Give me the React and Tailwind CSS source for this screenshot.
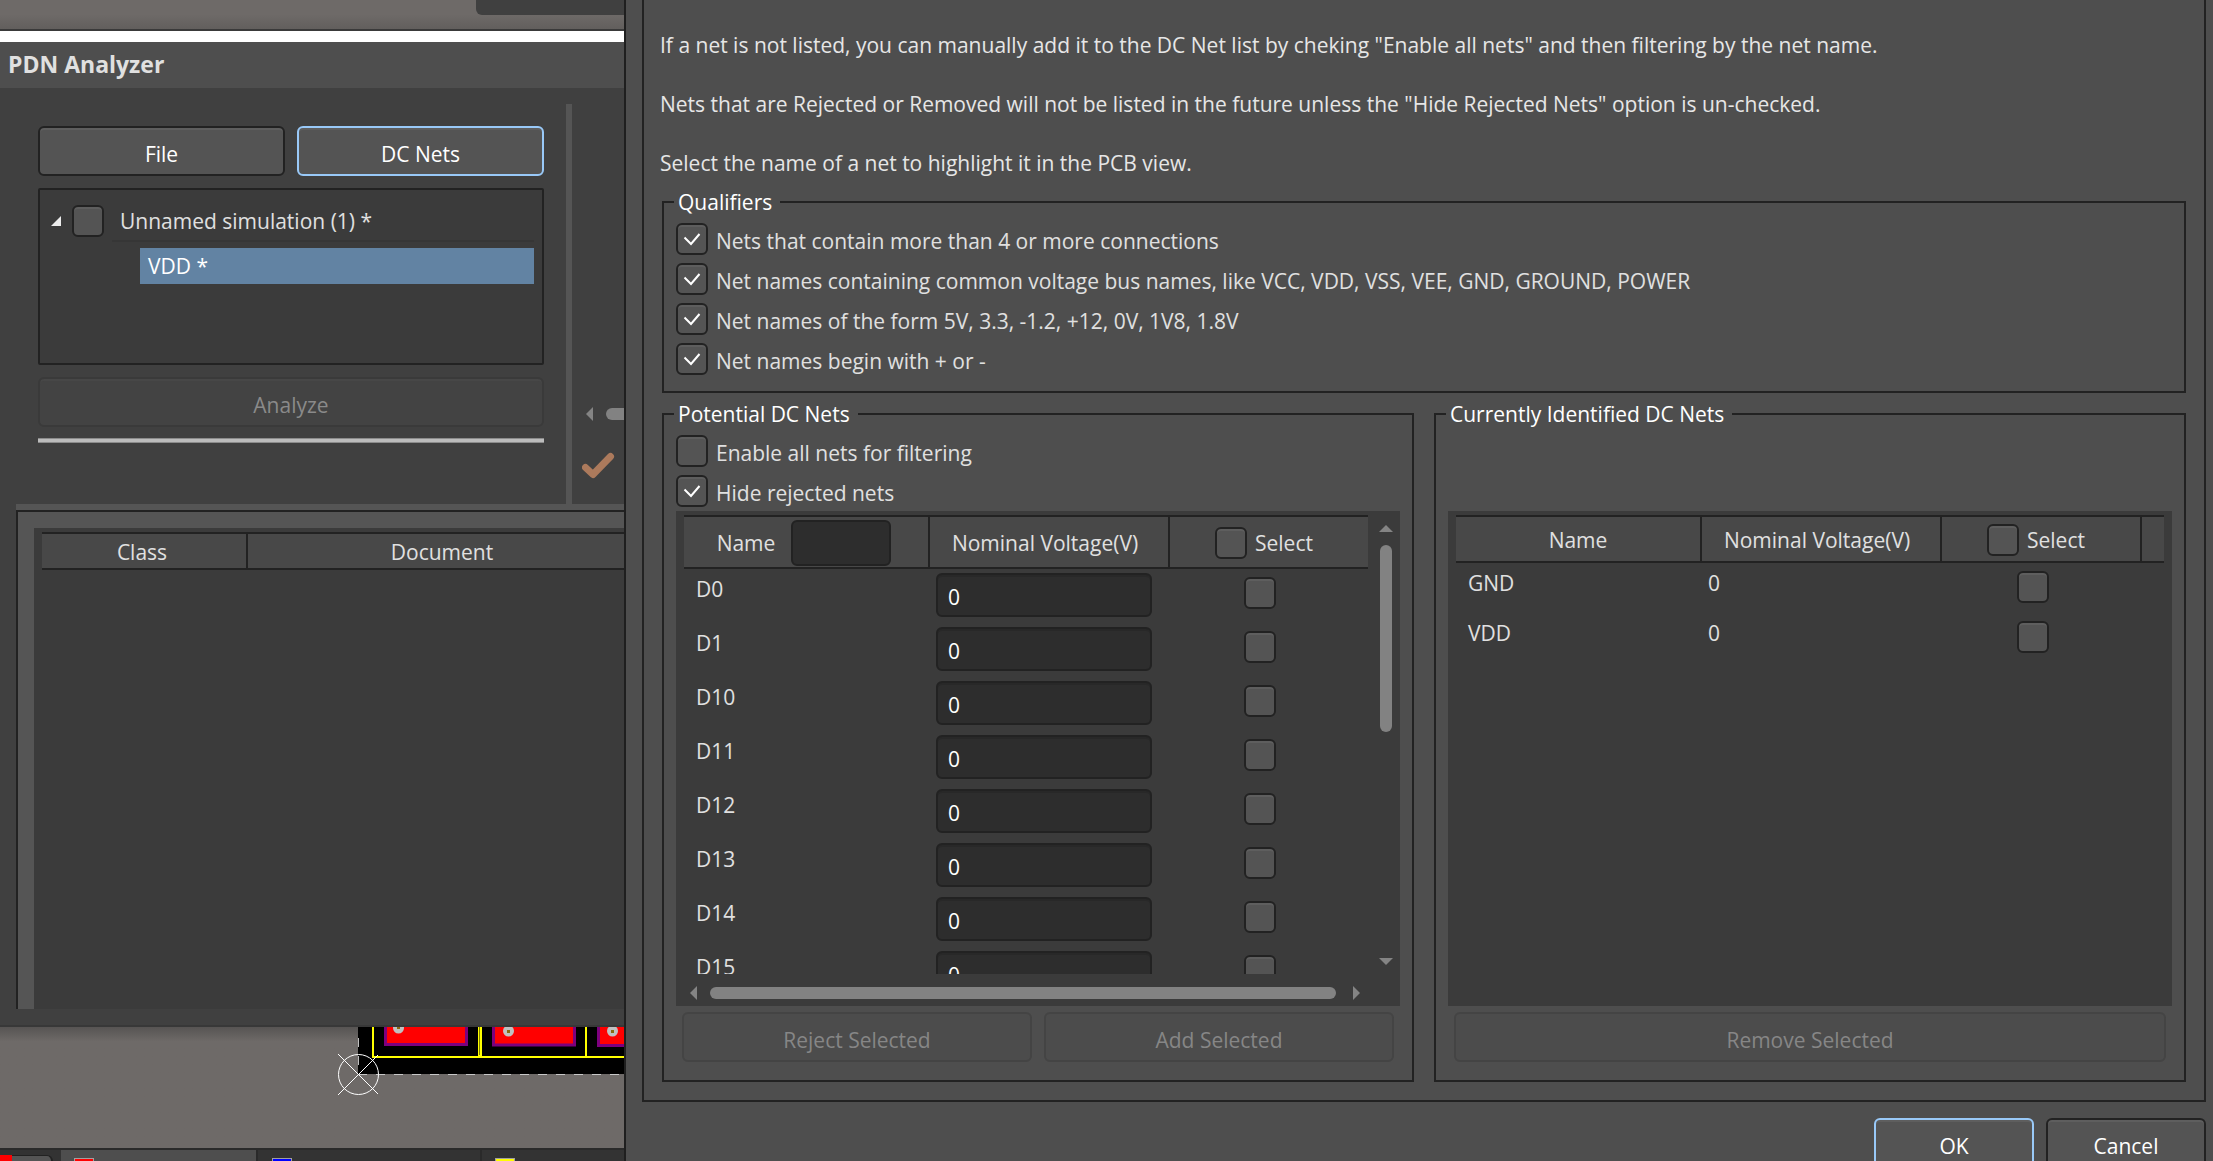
import React from "react";

const QUALIFIERS = [
  "Nets that contain more than 4 or more connections",
  "Net names containing common voltage bus names, like VCC, VDD, VSS, VEE, GND, GROUND, POWER",
  "Net names of the form 5V, 3.3, -1.2, +12, 0V, 1V8, 1.8V",
  "Net names begin with + or -",
];

const POTENTIAL = ["D0", "D1", "D10", "D11", "D12", "D13", "D14", "D15"];

const IDENTIFIED = [
  { name: "GND", voltage: "0" },
  { name: "VDD", voltage: "0" },
];

function CheckBox({ id, checked = false, label }) {
  return (
    <span className="relative block h-8 w-8 shrink-0">
      <input
        id={id}
        type="checkbox"
        defaultChecked={checked}
        aria-label={label}
        className="peer block h-8 w-8 appearance-none rounded-md border-2 border-[#222222] bg-[#545454] shadow-[inset_0_2px_0_#5e5e5e]"
      />
      <svg
        viewBox="0 0 32 32"
        className="pointer-events-none absolute inset-0 hidden h-8 w-8 peer-checked:block"
        fill="none"
        stroke="#ffffff"
        strokeWidth="2"
      >
        <path d="M8.5 14.5 L15 21 L23.5 11" />
      </svg>
    </span>
  );
}

function CheckRow({ id, checked, children }) {
  return (
    <div className="flex h-8 items-center gap-2">
      <CheckBox id={id} checked={checked} />
      <label htmlFor={id} className="pt-1 whitespace-nowrap">
        {children}
      </label>
    </div>
  );
}

function Button({ children, primary, disabled, onDark, className = "" }) {
  const tone = disabled
    ? onDark
      ? "border-[#3a3a3a] bg-[#434343] text-[#8a8a8a] shadow-[inset_0_2px_0_#474747]"
      : "border-[#444444] bg-[#4c4c4c] text-[#868686]"
    : primary
      ? "border-[#99c9f8] bg-[#545454] text-white shadow-[inset_0_2px_0_#5e5e5e]"
      : "border-[#222222] bg-[#545454] text-white shadow-[inset_0_2px_0_#5e5e5e]";
  return (
    <button
      type="button"
      disabled={disabled}
      className={`h-[50px] rounded-md border-2 pt-1.5 ${tone} ${className}`}
    >
      {children}
    </button>
  );
}

function Group({ title, className = "", children }) {
  return (
    <fieldset className={`min-w-0 border-2 border-[#222222] px-3 ${className}`}>
      <legend className="-ml-0.5 h-[30px] pr-2 pl-1 leading-[30px] text-white">{title}</legend>
      {children}
    </fieldset>
  );
}

const TH = "border-y-2 border-[#222222] bg-[#484848] p-0 pt-0.5 text-center font-normal";

function PotentialTable() {
  return (
    <table className="w-full table-fixed border-separate border-spacing-0">
      <colgroup>
        <col />
        <col className="w-[240px]" />
        <col className="w-[198px]" />
      </colgroup>
      <thead>
        <tr className="h-[54px]">
          <th className={`${TH} border-r-2`}>
            <div className="flex items-center justify-center gap-4 pr-1">
              <label htmlFor="name-filter">Name</label>
              <input
                id="name-filter"
                type="text"
                className="h-[46px] w-[100px] rounded-md border-2 border-[#222222] bg-[#2d2d2d] px-2"
              />
            </div>
          </th>
          <th className={`${TH} border-r-2 pr-2`}>Nominal Voltage(V)</th>
          <th className={TH}>
            <div className="flex items-center justify-center gap-2 pr-2.5">
              <CheckBox id="potential-all" />
              <label htmlFor="potential-all">Select</label>
            </div>
          </th>
        </tr>
      </thead>
      <tbody>
        {POTENTIAL.map((net) => (
          <tr key={net} className="h-[54px]">
            <td className="p-0 pt-1.5 pl-3 align-top">{net}</td>
            <td className="p-0 pt-1 pl-1.5 align-top">
              <input
                type="text"
                defaultValue="0"
                aria-label={`${net} nominal voltage`}
                className="block h-11 w-[216px] rounded-md border-2 border-[#222222] bg-[#2d2d2d] px-2.5 pt-1 text-white shadow-[inset_0_2px_0_#282828]"
              />
            </td>
            <td className="p-0 pt-2 pr-[18px] align-top">
              <div className="flex justify-center">
                <CheckBox label={`Select ${net}`} />
              </div>
            </td>
          </tr>
        ))}
      </tbody>
    </table>
  );
}

function IdentifiedTable() {
  return (
    <table className="w-full table-fixed border-separate border-spacing-0">
      <colgroup>
        <col />
        <col className="w-[240px]" />
        <col className="w-[200px]" />
        <col className="w-[22px]" />
      </colgroup>
      <thead>
        <tr className="h-12">
          <th className={`${TH} border-r-2`}>Name</th>
          <th className={`${TH} border-r-2 pr-2`}>Nominal Voltage(V)</th>
          <th className={`${TH} border-r-2`}>
            <div className="flex items-center justify-center gap-2 pr-2.5">
              <CheckBox id="identified-all" />
              <label htmlFor="identified-all">Select</label>
            </div>
          </th>
          <th className={TH} />
        </tr>
      </thead>
      <tbody>
        {IDENTIFIED.map((net) => (
          <tr key={net.name} className="h-[50px]">
            <td className="p-0 pt-1.5 pl-3 align-top">{net.name}</td>
            <td className="p-0 pt-1.5 pl-1.5 align-top">{net.voltage}</td>
            <td className="p-0 pt-2 pr-[18px] align-top">
              <div className="flex justify-center">
                <CheckBox label={`Select ${net.name}`} />
              </div>
            </td>
            <td />
          </tr>
        ))}
      </tbody>
    </table>
  );
}

function Arrow({ points, className }) {
  return (
    <svg viewBox="0 0 14 14" className={`shrink-0 ${className}`} fill="#848484">
      <polygon points={points} />
    </svg>
  );
}

function BoardView() {
  return (
    <svg width="290" height="123" viewBox="0 0 290 123" className="block shrink-0">
      <rect x="24" y="0" width="266" height="47" fill="#000000" />
      <g fill="#ff0000" stroke="#7d007d" strokeWidth="3">
        <rect x="51.500" y="-4" width="81" height="21.500" />
        <rect x="159.500" y="-4" width="81" height="22" />
        <rect x="264.500" y="-4" width="82" height="22.500" />
      </g>
      <g fill="none" stroke="#ffff00" strokeWidth="2">
        <path d="M39 0 V30 H290" />
        <path d="M146 0 V30" strokeWidth="4" />
        <path d="M252 0 V30" />
      </g>
      <path d="M145.500 0 V28" stroke="#808000" strokeWidth="1" />
      <g fill="#c0c0c0">
        <ellipse cx="64.500" cy="1" rx="5.500" ry="5.500" />
        <ellipse cx="174.500" cy="4" rx="5.500" ry="5.500" />
        <ellipse cx="278.500" cy="4" rx="5.500" ry="5.500" />
      </g>
      <g fill="#8a6a10">
        <rect x="63" y="0" width="3" height="2" />
        <rect x="173" y="3" width="3" height="3" />
        <rect x="277" y="3" width="3" height="3" />
      </g>
      <path d="M24.500 11 V47" stroke="#c0c0c0" strokeDasharray="9 9" />
      <path d="M24 47.500 H290" stroke="#c8c8c8" strokeDasharray="9 9" />
      <g fill="none" stroke="#ffffff" strokeWidth="1">
        <circle cx="24.500" cy="47.500" r="20" />
        <path d="M4 27 L44 67 M4 68 L44 28" />
      </g>
    </svg>
  );
}

function Analyzer() {
  return (
    <section className="flex min-w-0 flex-col overflow-hidden bg-[#6e6a68]">
      <div className="flex h-[29px] shrink-0 justify-end bg-linear-to-b from-[#6e6a68] from-50% to-[#625f5d]">
        <div className="h-[15px] w-[148px] rounded-bl-md bg-[#404040]" />
      </div>
      <div className="h-0.5 shrink-0 bg-[#3a3a3a]" />
      <div className="h-[11px] shrink-0 bg-white" />
      <h1 className="h-[46px] shrink-0 bg-[#4e4e4e] pl-2 text-[23px] leading-[44px] font-bold">
        PDN Analyzer
      </h1>

      <div className="flex flex-1 flex-col border-b-2 border-[#383838] bg-[#404040] pb-4">
        <div className="flex h-[416px] shrink-0">
          <div className="flex min-w-0 flex-1 flex-col pt-[38px] pr-[22px] pl-[38px]">
            <div className="grid grid-cols-2 gap-3">
              <Button>File</Button>
              <Button primary>DC Nets</Button>
            </div>
            <div className="mt-3 h-[177px] rounded-xs border-2 border-[#222222] bg-[#3b3b3b] pt-2.5 pr-2 pl-[11px]">
              <div className="flex items-center">
                <svg viewBox="0 0 10 10" className="mr-[11px] h-2.5 w-2.5" fill="#ececec">
                  <polygon points="10,0 10,10 0,10" />
                </svg>
                <CheckBox id="simulation" />
                <label
                  htmlFor="simulation"
                  className="ml-2 h-[42px] flex-1 border-b-2 border-[#363636] pt-[7px] pl-2"
                >
                  Unnamed simulation (1) *
                </label>
              </div>
              <div className="mt-1.5 ml-[89px] h-9 bg-[#6283a3] pl-2 leading-9 text-white">VDD *</div>
            </div>
            <Button disabled onDark className="mt-3">
              Analyze
            </Button>
            <div className="mt-[11px] h-[5px] border-y border-[#8c8c8c] bg-[#bcbcbc]" />
          </div>
          <div className="mt-4 w-1.5 bg-[#555555]" />
          <div className="flex w-[52px] flex-col items-start overflow-hidden pt-[319px] pl-2.5">
            <div className="flex items-center gap-2.5">
              <Arrow points="11,0 11,14 4,7" className="h-3.5 w-3.5" />
              <div className="h-3 w-16 rounded-full bg-[#828282]" />
            </div>
            <svg
              viewBox="0 0 34 32"
              className="mt-7 h-8 w-[34px]"
              fill="none"
              stroke="#ac7a5c"
              strokeWidth="7"
              strokeLinecap="round"
              strokeLinejoin="round"
            >
              <path d="M3.5 18.500 L11 25.500 L28.500 7.500" />
            </svg>
          </div>
        </div>

        <div className="ml-4 h-1.5 shrink-0 bg-[#555555]" />
        <div className="ml-4 flex-1 border-t-2 border-l-2 border-[#222222] bg-[#555555] pt-4 pl-4">
          <div className="h-full overflow-hidden bg-[#3b3b3b] pt-1 pl-2">
            <table className="w-[594px] table-fixed border-separate border-spacing-0">
              <thead>
                <tr className="h-[38px]">
                  <th className={`${TH} w-[206px] border-r-2 pr-1`}>Class</th>
                  <th className={TH}>Document</th>
                </tr>
              </thead>
            </table>
          </div>
        </div>
      </div>

      <div className="flex h-[121px] shrink-0 justify-end overflow-hidden bg-linear-to-b from-[#575453] to-[#6e6a68] to-12%">
        <BoardView />
      </div>

      <div className="flex h-[13px] shrink-0 items-end overflow-hidden border-t-2 border-[#2a2a2a] bg-[#333333]">
        <div className="flex h-full w-[61px] items-end">
          <div className="h-1.5 w-3 bg-[#ff0000]" />
          <div className="h-1.5 w-[41px] rounded-tr-md border-t border-r-2 border-[#222222] bg-[#555555]" />
        </div>
        <div className="flex h-full w-[197px] items-end border-r-2 border-[#2a2a2a] bg-[#4e4e4e] pl-[13px]">
          <div className="h-[3px] w-5 border-x border-t border-[#a0a0a0] bg-[#ff0000]" />
        </div>
        <div className="flex h-full w-[224px] items-end border-r-2 border-[#2a2a2a] pl-3.5">
          <div className="h-[3px] w-5 border-x border-t border-[#a0a0a0] bg-[#0000ff]" />
        </div>
        <div className="flex h-full flex-1 items-end pl-[13px]">
          <div className="h-[3px] w-5 border-x border-t border-[#a0a0a0] bg-[#ffff00]" />
        </div>
      </div>
    </section>
  );
}

function NetsDialog() {
  return (
    <section className="flex min-w-0 flex-col border-l-2 border-[#1f1f1f] bg-[#4e4e4e] pr-[7px] pl-4">
      <div className="border-x-2 border-b-2 border-[#222222] px-[18px] pt-[30px] pb-[18px]">
        <div className="-ml-0.5 flex flex-col gap-[29px] leading-[30px] text-[#e6e6e6]">
          <p>
            If a net is not listed, you can manually add it to the DC Net list by cheking "Enable all
            nets" and then filtering by the net name.
          </p>
          <p>
            Nets that are Rejected or Removed will not be listed in the future unless the "Hide
            Rejected Nets" option is un-checked.
          </p>
          <p>Select the name of a net to highlight it in the PCB view.</p>
        </div>

        <Group title="Qualifiers" className="mt-[9px] h-[206px]">
          <div className="flex flex-col gap-2 pt-1.5">
            {QUALIFIERS.map((text, i) => (
              <CheckRow key={text} id={`qualifier-${i}`} checked>
                {text}
              </CheckRow>
            ))}
          </div>
        </Group>

        <div className="mt-1.5 grid grid-cols-2 gap-5">
          <Group title="Potential DC Nets" className="pb-[18px]">
            <div className="flex flex-col gap-2 pt-1.5">
              <CheckRow id="enable-all">Enable all nets for filtering</CheckRow>
              <CheckRow id="hide-rejected" checked>
                Hide rejected nets
              </CheckRow>
            </div>
            <div className="mt-1 h-[495px] bg-[#3b3b3b] pt-1 pl-2">
              <div className="flex h-[459px]">
                <div className="min-w-0 flex-1 overflow-hidden">
                  <PotentialTable />
                </div>
                <div className="flex w-8 flex-col items-center pt-1.5 pb-1.5 pl-1">
                  <Arrow points="0,11 14,11 7,4" className="h-3.5 w-3.5" />
                  <div className="mt-2.5 h-[187px] w-3 rounded-full bg-[#828282]" />
                  <Arrow points="0,4 14,4 7,11" className="mt-auto h-3.5 w-3.5" />
                </div>
              </div>
              <div className="mt-1.5 flex h-6 items-center gap-2.5 pt-0.5 pr-9 pl-0.5">
                <Arrow points="11,0 11,14 4,7" className="h-3.5 w-3.5" />
                <div className="h-3 flex-1 rounded-full bg-[#828282]" />
                <Arrow points="3,0 3,14 10,7" className="ml-1 h-3.5 w-3.5" />
              </div>
            </div>
            <div className="mt-1.5 grid grid-cols-2 gap-3 px-1.5">
              <Button disabled>Reject Selected</Button>
              <Button disabled>Add Selected</Button>
            </div>
          </Group>

          <Group title="Currently Identified DC Nets" className="pb-[18px]">
            <div className="mt-[82px] h-[495px] bg-[#3b3b3b] px-2 pt-1">
              <IdentifiedTable />
            </div>
            <div className="mt-1.5 grid px-1.5">
              <Button disabled>Remove Selected</Button>
            </div>
          </Group>
        </div>
      </div>

      <div className="mt-4 flex justify-end gap-3">
        <Button primary className="w-40">
          OK
        </Button>
        <Button className="w-40">Cancel</Button>
      </div>
    </section>
  );
}

export default function App() {
  return (
    <main className="grid h-screen grid-cols-[624fr_1589fr] grid-rows-[100%] overflow-hidden bg-[#4e4e4e] font-['Open_Sans','Noto_Sans',sans-serif] text-[21px] leading-7 text-[#e0e0e0]">
      <Analyzer />
      <NetsDialog />
    </main>
  );
}
